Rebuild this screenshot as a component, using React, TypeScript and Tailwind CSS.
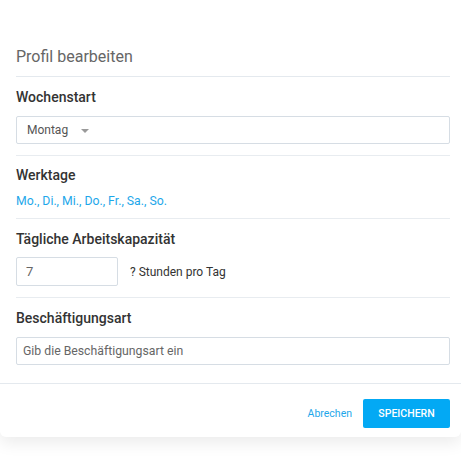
const DAYS = "Mo., Di., Mi., Do., Fr., Sa., So.";

function Label({ children }: { children: React.ReactNode }) {
  return <div className="text-[14px] leading-5 font-medium text-[#333]">{children}</div>;
}

export default function App() {
  return (
    <div className="h-[465px] w-full bg-white font-['Roboto',sans-serif] overflow-hidden">
      <div className="rounded-b-md bg-white shadow-[0_6px_16px_rgba(0,0,0,0.08)]">
        {/* header */}
        <div className="ml-4 mr-[11px] flex h-[77px] items-end border-b border-[#e4e9ee] pb-[9px]">
          <h1 className="text-[16px] leading-5 font-normal text-[#666]">Profil bearbeiten</h1>
        </div>

        {/* week start */}
        <div className="ml-4 mr-[11px] border-b border-[#e8ecf0] pt-[10px] pb-[11px]">
          <Label>Wochenstart</Label>
          <div className="mt-[9px] flex h-[28px] items-center rounded-[2px] border border-[#d6dde4] pl-[10px]">
            <span className="text-[12px] text-[#555]">Montag</span>
            <span className="ml-[13px] mt-[1px] h-0 w-0 border-x-[4px] border-t-[4px] border-x-transparent border-t-[#9a9a9a]" />
          </div>
        </div>

        {/* workdays */}
        <div className="ml-4 mr-[11px] border-b border-[#e8ecf0] pt-[9px] pb-[9px]">
          <Label>Werktage</Label>
          <div className="mt-[8px] text-[12.25px] leading-4 text-[#1ea7ea]">{DAYS}</div>
        </div>

        {/* capacity */}
        <div className="ml-4 mr-[11px] border-b border-[#e8ecf0] pt-[10px] pb-[11px]">
          <Label>Tägliche Arbeitskapazität</Label>
          <div className="mt-[8px] flex items-center">
            <div className="flex h-[29px] w-[102px] items-center rounded-[2px] border border-[#d6dde4] pl-[9px] text-[13px] text-[#666]">
              7
            </div>
            <span className="ml-[12px] text-[12px] text-[#333]">? Stunden pro Tag</span>
          </div>
        </div>

        {/* employment type */}
        <div className="ml-4 mr-[11px] pt-[10px] pb-[18px]">
          <Label>Beschäftigungsart</Label>
          <div className="mt-[9px] flex h-[28px] items-center rounded-[2px] border border-[#d6dde4] pl-[6px] text-[12.25px] text-[#666]">
            Gib die Beschäftigungsart ein
          </div>
        </div>

        {/* footer */}
        <div className="flex items-center justify-end gap-[11px] border-t border-[#e4e9ee] pt-[15px] pb-[9px] pr-[11px]">
          <button type="button" className="text-[10.5px] text-[#1ea7ea]">
            Abrechen
          </button>
          <button
            type="button"
            className="h-[29px] w-[87px] rounded-[2px] bg-[#03a9f4] text-[10.5px] font-medium text-white"
          >
            SPEICHERN
          </button>
        </div>
      </div>
    </div>
  );
}
